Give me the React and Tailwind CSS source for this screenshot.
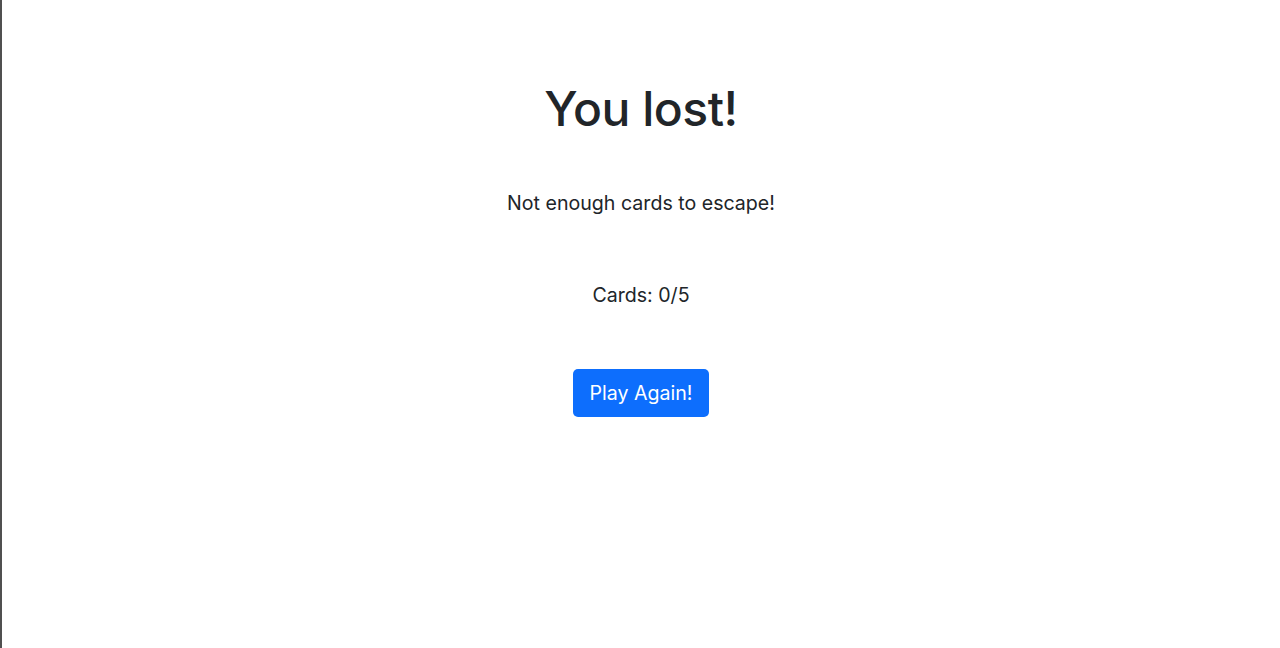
export default function App() {
  return (
    <div
      className="min-h-screen h-[648px] border-l-2 border-[#505050] bg-white text-[#212529] flex flex-col items-center"
      style={{ fontFamily: 'Inter, "Liberation Sans", Arial, sans-serif' }}
    >
      <h1 className="mt-[80px] text-[48px] leading-[58px] font-medium tracking-[-0.5px]">You lost!</h1>
      <p className="mt-[50px] text-[19.6px] leading-[30px]">Not enough cards to escape!</p>
      <p className="mt-[62px] text-[19.6px] leading-[30px]">Cards: 0/5</p>
      <button
        type="button"
        className="mt-[59px] h-[48px] w-[136px] rounded-[5px] bg-[#0d6efd] text-white text-[19.6px] pt-[1px] hover:bg-[#0b5ed7]"
      >
        Play Again!
      </button>
    </div>
  );
}
